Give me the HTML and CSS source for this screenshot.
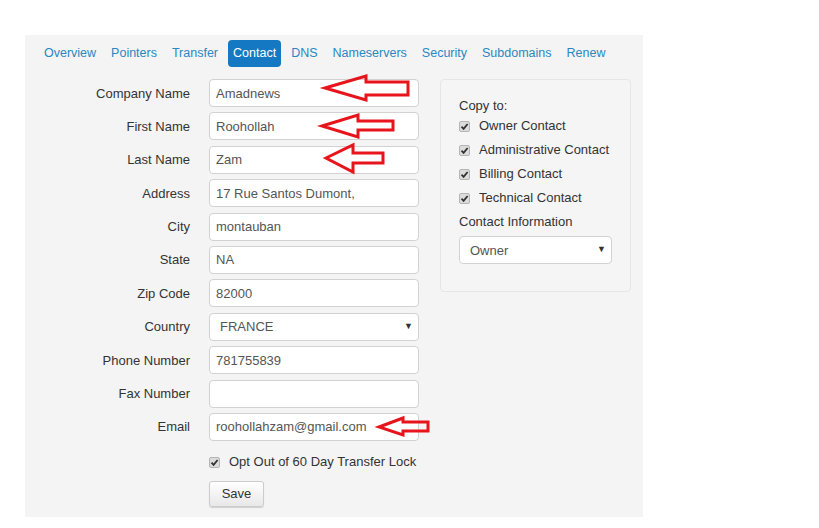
FILE: index.html
```html
<!DOCTYPE html>
<html lang="en">
<head>
  <meta charset="UTF-8">
  <title>Domain - Contact</title>
  <link rel="stylesheet" href="styles.css">
</head>
<body>
  <div class="panel">
    <ul class="tabs">
      <li><a href="#">Overview</a></li>
      <li><a href="#">Pointers</a></li>
      <li><a href="#">Transfer</a></li>
      <li><a href="#" class="active">Contact</a></li>
      <li><a href="#">DNS</a></li>
      <li><a href="#">Nameservers</a></li>
      <li><a href="#">Security</a></li>
      <li><a href="#">Subdomains</a></li>
      <li><a href="#">Renew</a></li>
    </ul>

    <div class="content">
      <form class="contact-form">
        <label for="company">Company Name</label>
        <input type="text" id="company" value="Amadnews">

        <label for="first">First Name</label>
        <input type="text" id="first" value="Roohollah">

        <label for="last">Last Name</label>
        <input type="text" id="last" value="Zam">

        <label for="address">Address</label>
        <input type="text" id="address" value="17 Rue Santos Dumont,">

        <label for="city">City</label>
        <input type="text" id="city" value="montauban">

        <label for="state">State</label>
        <input type="text" id="state" value="NA">

        <label for="zip">Zip Code</label>
        <input type="text" id="zip" value="82000">

        <label for="country">Country</label>
        <div class="select-wrap">
          <select id="country">
            <option>FRANCE</option>
          </select>
        </div>

        <label for="phone">Phone Number</label>
        <input type="text" id="phone" value="781755839">

        <label for="fax">Fax Number</label>
        <input type="text" id="fax" value="">

        <label for="email">Email</label>
        <input type="text" id="email" value="roohollahzam@gmail.com">

        <div class="check-row opt-out">
          <span class="check"><svg width="11" height="11" viewBox="0 0 11 11"><path d="M2.5 5.6 L4.6 7.8 L8.6 3" fill="none" stroke="#333" stroke-width="1.8"/></svg></span>
          Opt Out of 60 Day Transfer Lock
        </div>

        <div class="actions">
          <button type="button">Save</button>
        </div>
      </form>

      <aside class="copy-box">
        <div class="copy-title">Copy to:</div>
        <div class="check-row">
          <span class="check"><svg width="11" height="11" viewBox="0 0 11 11"><path d="M2.5 5.6 L4.6 7.8 L8.6 3" fill="none" stroke="#333" stroke-width="1.8"/></svg></span>
          Owner Contact
        </div>
        <div class="check-row">
          <span class="check"><svg width="11" height="11" viewBox="0 0 11 11"><path d="M2.5 5.6 L4.6 7.8 L8.6 3" fill="none" stroke="#333" stroke-width="1.8"/></svg></span>
          Administrative Contact
        </div>
        <div class="check-row">
          <span class="check"><svg width="11" height="11" viewBox="0 0 11 11"><path d="M2.5 5.6 L4.6 7.8 L8.6 3" fill="none" stroke="#333" stroke-width="1.8"/></svg></span>
          Billing Contact
        </div>
        <div class="check-row">
          <span class="check"><svg width="11" height="11" viewBox="0 0 11 11"><path d="M2.5 5.6 L4.6 7.8 L8.6 3" fill="none" stroke="#333" stroke-width="1.8"/></svg></span>
          Technical Contact
        </div>
        <div class="copy-title info">Contact Information</div>
        <div class="select-wrap">
          <select>
            <option>Owner</option>
          </select>
        </div>
      </aside>
    </div>
  </div>

  <!-- red annotation arrows -->
  <svg class="marks" width="819" height="528" viewBox="0 0 819 528">
    <polygon points="325,88 366,76 366,82 408,82 408,95 366,95 366,100"/>
    <polygon points="322,126 358,115 358,121 393,121 393,130 358,130 358,137"/>
    <polygon points="326,158 353,145 353,153 383,153 383,163 353,163 353,172"/>
    <polygon points="379,427 403,418 403,422 428,422 428,431 403,431 403,435"/>
  </svg>
</body>
</html>
```

FILE: styles.css
```css
* {
  box-sizing: border-box;
  margin: 0;
  padding: 0;
}

body {
  font-family: "Liberation Sans", Arial, sans-serif;
  font-size: 13px;
  color: #333;
  background: #fff;
}

/* Szary panel */
.panel {
  width: 618px;
  height: 482px;
  margin: 35px 0 0 25px;
  padding: 5px 14px 0;
  background: #f4f4f4;
}

/* Zakładki */
.tabs {
  display: flex;
  gap: 5px;
  list-style: none;
}

.tabs a {
  display: block;
  padding: 6px 5px;
  line-height: 15px;
  font-size: 12.5px;
  color: #2a87c2;
  text-decoration: none;
  border-radius: 4px;
}

.tabs a.active {
  background: #1479c2;
  color: #fff;
}

.content {
  display: flex;
  margin-top: 12px;
}

/* Formularz */
.contact-form {
  display: grid;
  grid-template-columns: 151px 210px;
  column-gap: 19px;
  row-gap: 5.4px;
  align-items: center;
}

.contact-form label {
  text-align: right;
  color: #333;
}

input[type="text"],
select {
  width: 100%;
  height: 28px;
  padding: 0 6px;
  border: 1px solid #d2d2d2;
  border-radius: 4px;
  background: #fff;
  font-family: inherit;
  font-size: 13px;
  color: #555;
}

select {
  appearance: none;
  -webkit-appearance: none;
  padding-left: 10px;
}

.select-wrap {
  position: relative;
}

.select-wrap::after {
  content: "\25BC";
  position: absolute;
  right: 6px;
  top: 8px;
  font-size: 9px;
  color: #333;
  pointer-events: none;
}

.check-row {
  display: flex;
  align-items: center;
  gap: 9px;
  line-height: 24px;
  color: #333;
}

.check {
  display: block;
  width: 11px;
  height: 11px;
  border: 1px solid #b5b5b5;
  border-radius: 2px;
  background: #dcdcdc;
}

.check svg {
  display: block;
  margin: -1px;
}

.opt-out {
  grid-column: 2;
  margin-top: 6px;
  line-height: 20px;
}

.actions {
  grid-column: 2;
  margin-top: 3px;
}

button {
  width: 55px;
  height: 26px;
  border: 1px solid #ccc;
  border-radius: 3px;
  background: linear-gradient(#fff, #e8e8e8);
  box-shadow: 0 1px 1px rgba(0,0,0,0.15);
  font-family: inherit;
  font-size: 13px;
  color: #333;
}

/* Panel kopiowania */
.copy-box {
  width: 191px;
  height: 213px;
  margin-left: 21px;
  padding: 18px 18px 0;
  border: 1px solid #e6e6e6;
  border-radius: 4px;
  background: #f5f5f5;
}

.copy-title {
  line-height: 16px;
}

.copy-title.info {
  line-height: 24px;
  margin-bottom: 2px;
}

.copy-box .select-wrap {
  width: 153px;
}

/* Strzałki */
.marks {
  position: absolute;
  top: 0;
  left: 0;
  pointer-events: none;
}

.marks polygon {
  fill: none;
  stroke: #e8141b;
  stroke-width: 3;
  stroke-linejoin: miter;
}
```
